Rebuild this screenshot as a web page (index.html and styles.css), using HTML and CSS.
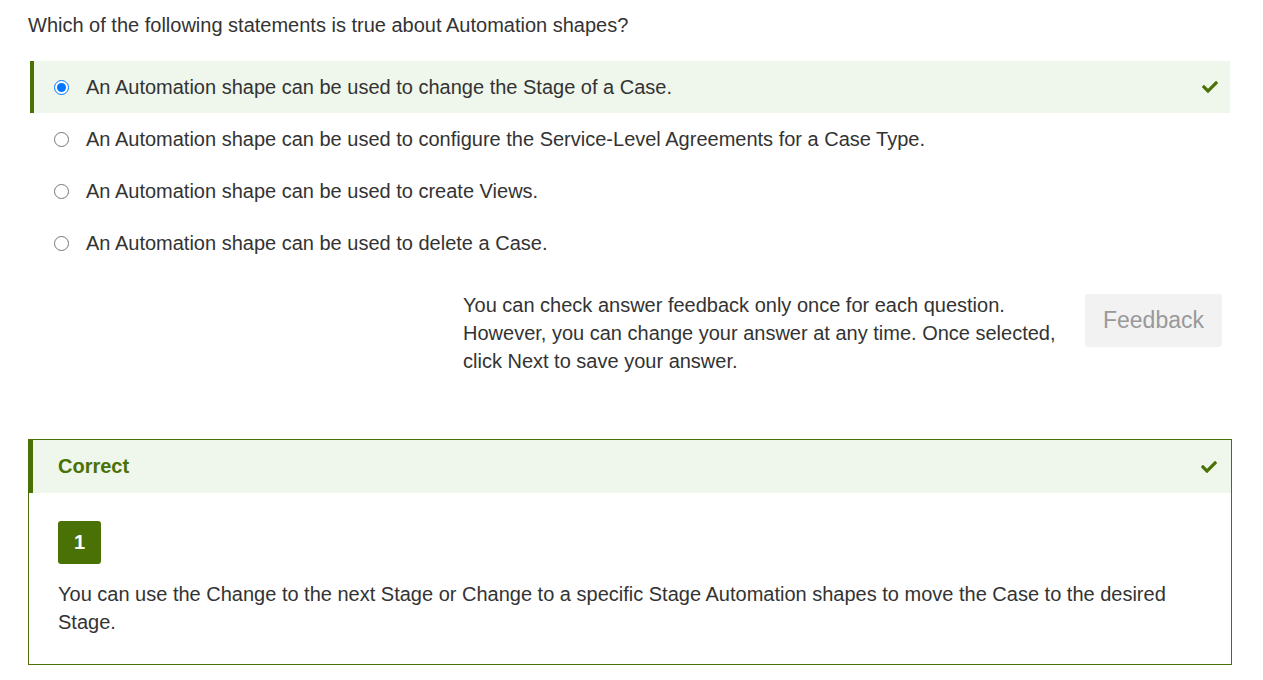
FILE: index.html
```html
<!DOCTYPE html>
<html>
<head>
<meta charset="utf-8">
<link rel="stylesheet" href="styles.css">
</head>
<body>
<div class="page">
  <p class="question">Which of the following statements is true about Automation shapes?</p>
  <div class="options">
    <label class="option selected">
      <input type="radio" name="q" checked>
      <span class="opt-text">An Automation shape can be used to change the Stage of a Case.</span>
      <svg class="check" viewBox="0 0 512 512" width="16" height="16"><path fill="#4a7106" d="M173.9 439.4l-166.4-166.4c-10-10-10-26.2 0-36.2l36.2-36.2c10-10 26.2-10 36.2 0L192 312.7 432.1 72.6c10-10 26.2-10 36.2 0l36.2 36.2c10 10 10 26.2 0 36.2L210.1 439.4c-10 10-26.2 10-36.2 0z"/></svg>
    </label>
    <label class="option">
      <input type="radio" name="q">
      <span class="opt-text">An Automation shape can be used to configure the Service-Level Agreements for a Case Type.</span>
    </label>
    <label class="option">
      <input type="radio" name="q">
      <span class="opt-text">An Automation shape can be used to create Views.</span>
    </label>
    <label class="option">
      <input type="radio" name="q">
      <span class="opt-text">An Automation shape can be used to delete a Case.</span>
    </label>
  </div>
  <div class="feedback-row">
    <p class="feedback-note">You can check answer feedback only once for each question. However, you can change your answer at any time. Once selected, click Next to save your answer.</p>
    <button class="feedback-btn" disabled>Feedback</button>
  </div>
  <div class="result">
    <div class="result-head">
      <span class="result-title">Correct</span>
      <svg class="check" viewBox="0 0 512 512" width="16" height="16"><path fill="#4a7106" d="M173.9 439.4l-166.4-166.4c-10-10-10-26.2 0-36.2l36.2-36.2c10-10 26.2-10 36.2 0L192 312.7 432.1 72.6c10-10 26.2-10 36.2 0l36.2 36.2c10 10 10 26.2 0 36.2L210.1 439.4c-10 10-26.2 10-36.2 0z"/></svg>
    </div>
    <div class="result-body">
      <div class="badge">1</div>
      <p class="explain">You can use the Change to the next Stage or Change to a specific Stage Automation shapes to move the Case to the desired Stage.</p>
    </div>
  </div>
</div>
</body>
</html>
```

FILE: styles.css
```css
html, body {
  margin: 0;
  padding: 0;
  background: #ffffff;
}
body {
  font-family: "Liberation Sans", Arial, sans-serif;
  font-size: 20px;
  color: #333333;
}
.page {
  width: 1204px;
  padding: 11px 0 0 28px;
}
.question {
  margin: 0;
  line-height: 28px;
}
.options {
  margin: 22px 2px 0 2px;
  display: flex;
  flex-direction: column;
}
.option {
  display: flex;
  align-items: center;
  height: 52px;
  padding-left: 20px;
  border-left: 4px solid transparent;
  cursor: pointer;
}
.option.selected {
  background: #eff6ec;
  border-left-color: #4a7106;
}
.option input {
  margin: 0;
  width: 15px;
  height: 15px;
  flex: none;
}
.opt-text {
  margin-left: 17px;
  flex: 1;
  line-height: 28px;
}
.option .check {
  margin-right: 12px;
}
.feedback-row {
  display: flex;
  justify-content: flex-end;
  align-items: flex-start;
  gap: 22px;
  margin: 22px 10px 0 0;
}
.feedback-note {
  margin: 0;
  width: 600px;
  line-height: 28px;
}
.feedback-btn {
  margin-top: 3px;
  width: 137px;
  height: 53px;
  border: none;
  border-radius: 3px;
  background: #f2f2f2;
  color: #999999;
  font-family: "Liberation Sans", Arial, sans-serif;
  font-size: 23px;
  padding: 0;
}
.result {
  margin-top: 64px;
  border: 1px solid #4a7106;
}
.result-head {
  display: flex;
  align-items: center;
  justify-content: space-between;
  height: 53px;
  background: #eff6ec;
  border-left: 4px solid #4a7106;
  padding: 0 14px 0 25px;
}
.result-title {
  font-weight: bold;
  color: #4a7106;
  font-size: 20px;
}
.result-body {
  padding: 28px 29px 28px 29px;
}
.badge {
  width: 43px;
  height: 43px;
  background: #4a7106;
  color: #ffffff;
  font-weight: bold;
  font-size: 20px;
  border-radius: 3px;
  display: flex;
  align-items: center;
  justify-content: center;
}
.explain {
  margin: 16px 0 0 0;
  line-height: 28px;
}
```
